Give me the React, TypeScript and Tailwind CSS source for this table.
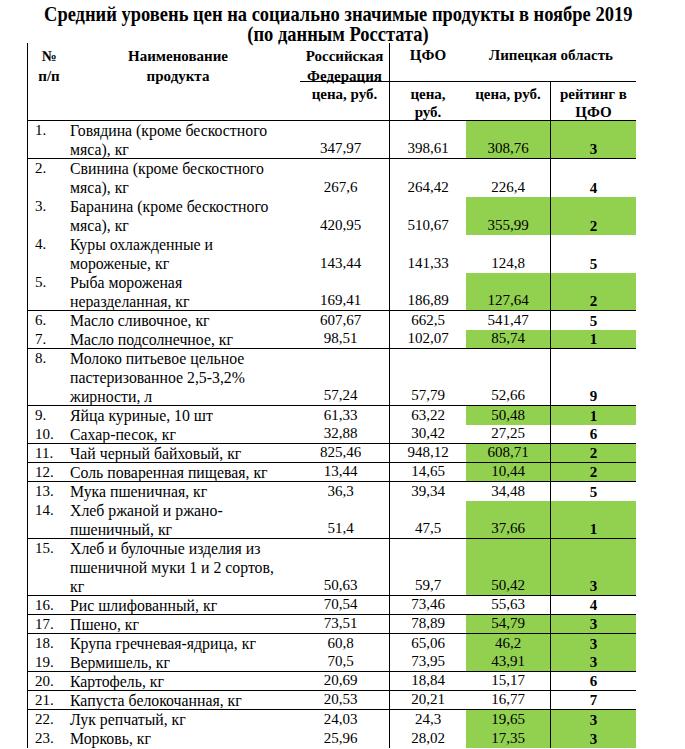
import React from 'react'

type Row = {
   n: string
   name: string[]
   rf: string
   cfo: string
   lip: string
   rank: string
   green?: boolean
   line?: boolean
}

const rows: Row[] = [
   { n: '1.', name: ['Говядина (кроме бескостного', 'мяса), кг'], rf: '347,97', cfo: '398,61', lip: '308,76', rank: '3', green: true, line: true },
   { n: '2.', name: ['Свинина (кроме бескостного', 'мяса), кг'], rf: '267,6', cfo: '264,42', lip: '226,4', rank: '4' },
   { n: '3.', name: ['Баранина (кроме бескостного', 'мяса), кг'], rf: '420,95', cfo: '510,67', lip: '355,99', rank: '2', green: true },
   { n: '4.', name: ['Куры охлажденные и', 'мороженые, кг'], rf: '143,44', cfo: '141,33', lip: '124,8', rank: '5' },
   { n: '5.', name: ['Рыба мороженая', 'неразделанная, кг'], rf: '169,41', cfo: '186,89', lip: '127,64', rank: '2', green: true, line: true },
   { n: '6.', name: ['Масло сливочное, кг'], rf: '607,67', cfo: '662,5', lip: '541,47', rank: '5' },
   { n: '7.', name: ['Масло подсолнечное, кг'], rf: '98,51', cfo: '102,07', lip: '85,74', rank: '1', green: true, line: true },
   { n: '8.', name: ['Молоко питьевое цельное', 'пастеризованное 2,5-3,2%', 'жирности, л'], rf: '57,24', cfo: '57,79', lip: '52,66', rank: '9', line: true },
   { n: '9.', name: ['Яйца куриные, 10 шт'], rf: '61,33', cfo: '63,22', lip: '50,48', rank: '1', green: true },
   { n: '10.', name: ['Сахар-песок, кг'], rf: '32,88', cfo: '30,42', lip: '27,25', rank: '6', line: true },
   { n: '11.', name: ['Чай черный байховый, кг'], rf: '825,46', cfo: '948,12', lip: '608,71', rank: '2', green: true, line: true },
   { n: '12.', name: ['Соль поваренная пищевая, кг'], rf: '13,44', cfo: '14,65', lip: '10,44', rank: '2', green: true, line: true },
   { n: '13.', name: ['Мука пшеничная, кг'], rf: '36,3', cfo: '39,34', lip: '34,48', rank: '5' },
   { n: '14.', name: ['Хлеб ржаной и ржано-', 'пшеничный, кг'], rf: '51,4', cfo: '47,5', lip: '37,66', rank: '1', green: true, line: true },
   { n: '15.', name: ['Хлеб и булочные изделия из', 'пшеничной муки 1 и 2 сортов,', 'кг'], rf: '50,63', cfo: '59,7', lip: '50,42', rank: '3', green: true, line: true },
   { n: '16.', name: ['Рис шлифованный, кг'], rf: '70,54', cfo: '73,46', lip: '55,63', rank: '4', line: true },
   { n: '17.', name: ['Пшено, кг'], rf: '73,51', cfo: '78,89', lip: '54,79', rank: '3', green: true, line: true },
   { n: '18.', name: ['Крупа гречневая-ядрица, кг'], rf: '60,8', cfo: '65,06', lip: '46,2', rank: '3', green: true },
   { n: '19.', name: ['Вермишель, кг'], rf: '70,5', cfo: '73,95', lip: '43,91', rank: '3', green: true, line: true },
   { n: '20.', name: ['Картофель, кг'], rf: '20,69', cfo: '18,84', lip: '15,17', rank: '6', line: true },
   { n: '21.', name: ['Капуста белокочанная, кг'], rf: '20,53', cfo: '20,21', lip: '16,77', rank: '7', line: true },
   { n: '22.', name: ['Лук репчатый, кг'], rf: '24,03', cfo: '24,3', lip: '19,65', rank: '3', green: true },
   { n: '23.', name: ['Морковь, кг'], rf: '25,96', cfo: '28,02', lip: '17,35', rank: '3', green: true },
]

const heights: Record<number, string> = { 1: 'h-[19px]', 2: 'h-[38px]', 3: 'h-[57px]' }

function DataRow({ row }: { row: Row }) {
   return (
      <div
         className={`flex box-border ${heights[row.name.length]} ${row.line ? 'border-b border-black' : ''}`}
      >
         <div className="w-[42px] pl-[7px]">{row.n}</div>
         <div className="w-[230px] whitespace-nowrap text-[15.8px]">
            {row.name.map((l, i) => (
               <div key={i}>{l}</div>
            ))}
         </div>
         <div className="box-border flex w-[90px] items-end justify-center border-r border-black pr-[8px]">
            {row.rf}
         </div>
         <div className="flex w-[76px] items-end justify-center">{row.cfo}</div>
         <div
            className={`flex w-[84px] items-end justify-center ${row.green ? 'bg-[#92d050]' : ''}`}
         >
            {row.lip}
         </div>
         <div
            className={`box-border flex w-[86px] items-end justify-center border-l border-black font-bold ${row.green ? 'bg-[#92d050]' : ''}`}
         >
            <span className="translate-y-[1px]">{row.rank}</span>
         </div>
      </div>
   )
}

export default function App() {
   return (
      <div className="min-h-screen w-[685px] bg-white font-['Liberation_Serif',serif] text-[15px] leading-[19px] text-black">
         {/* Title */}
         <div className="flex h-[43px] w-[676px] flex-col items-center pt-[4px] text-[22px] font-bold leading-[20px]">
            <div className="scale-x-[0.84] whitespace-nowrap">
               Средний уровень цен на социально значимые продукты в ноябре 2019
            </div>
            <div className="scale-x-[0.84] whitespace-nowrap">(по данным Росстата)</div>
         </div>

         <div className="ml-[27px] box-border w-[609px] border-l border-black">
            {/* Header */}
            <div className="box-border flex h-[78px] border-b border-black font-bold">
               <div className="w-[42px] pt-[3px] text-center leading-[20px]">
                  <div>№</div>
                  <div>п/п</div>
               </div>
               <div className="w-[230px] pr-[14px] pt-[3px] text-center leading-[20px]">
                  <div>Наименование</div>
                  <div>продукта</div>
               </div>
               <div className="flex w-[336px] flex-col">
                  <div className="box-border flex h-[39px] border-b border-black">
                     <div className="box-border w-[90px] border-r border-black pt-[3px] text-center leading-[20px]">
                        <div>Российская</div>
                        <div>Федерация</div>
                     </div>
                     <div className="w-[76px] pt-[3px] text-center">ЦФО</div>
                     <div className="w-[170px] pt-[3px] text-center">Липецкая область</div>
                  </div>
                  <div className="flex flex-1 leading-[18px]">
                     <div className="box-border w-[90px] border-r border-black pt-[3px] text-center">
                        цена, руб.
                     </div>
                     <div className="w-[76px] pt-[3px] text-center">
                        <div>цена,</div>
                        <div>руб.</div>
                     </div>
                     <div className="w-[84px] pt-[3px] text-center">цена, руб.</div>
                     <div className="box-border w-[86px] border-l border-black pt-[3px] text-center">
                        <div>рейтинг в</div>
                        <div>ЦФО</div>
                     </div>
                  </div>
               </div>
            </div>

            {/* Body */}
            {rows.map((r) => (
               <DataRow key={r.n} row={r} />
            ))}
         </div>
      </div>
   )
}
